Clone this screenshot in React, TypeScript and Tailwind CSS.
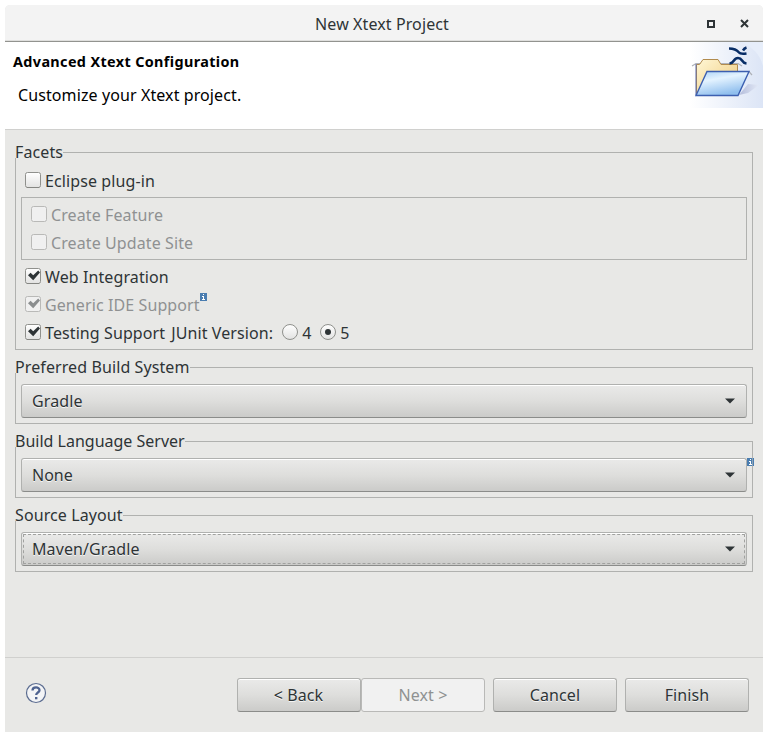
import React from "react";

const btn =
  "rounded-[3px] border border-[#b0b1af] border-b-[#8b8c8a] bg-linear-to-b from-[#eaeae9] via-[#dededc] to-[#cbcbc9] shadow-[inset_0_1px_0_#ffffff] [text-shadow:0_1px_0_#ffffffcc]";

function Mark({ kind, on, disabled }: { kind: "check" | "radio"; on?: boolean; disabled?: boolean }) {
  const ink = disabled ? "#8b8e8f" : "#2e3436";
  return (
    <svg width="16" height="16" viewBox="0 0 16 16" className="block shrink-0 overflow-visible">
      <defs>
        <linearGradient id="face" x1="0" y1="0" x2="0" y2="1">
          <stop offset="0" stopColor="#ffffff" />
          <stop offset="1" stopColor="#e2e2e1" />
        </linearGradient>
      </defs>
      {kind === "check" ? (
        <rect x=".5" y=".5" width="15" height="15" rx="2" fill={disabled ? "#f0f0f0" : "url(#face)"} stroke={disabled ? "#b9b9b7" : "#8f908c"} />
      ) : (
        <circle cx="8" cy="8" r="7.5" fill="url(#face)" stroke="#8f908c" />
      )}
      {kind === "check" && !disabled && <path d="M2 15.5h12" stroke="#858682" />}
      {on && kind === "check" && <path d="M3 7.2 5.6 4.800 8.200 7.300 13.200 2.600 15 4.400 8.200 12.300Z" fill={ink} />}
      {on && kind === "radio" && <circle cx="8" cy="8" r="3" fill={ink} />}
    </svg>
  );
}

function Check({ label, on, disabled }: { label: string; on?: boolean; disabled?: boolean }) {
  return (
    <div className={`flex h-7 items-center gap-1 ${disabled ? "text-[#8f9192]" : ""}`}>
      <Mark kind="check" on={on} disabled={disabled} />
      <span className="relative top-px whitespace-nowrap">{label}</span>
    </div>
  );
}

function Info() {
  return (
    <svg width="7" height="8" viewBox="0 0 7 8" shapeRendering="crispEdges" className="block">
      <path d="M0 0h7v8H0z" fill="#4a7db0" />
      <path d="M3 1h1v1H3zM2 3h2v3H3V4H2zM2 6h3v1H2z" fill="#ffffff" />
    </svg>
  );
}

function Group({ title, className, children }: { title: string; className: string; children: React.ReactNode }) {
  return (
    <section className={`relative border border-[#b0b1af] ${className}`}>
      <h2 className="-mt-[11px] -ml-px h-4 w-fit bg-[#e8e8e6] leading-[21px] whitespace-nowrap">{title}</h2>
      {children}
    </section>
  );
}

function Combo({ value, focused }: { value: string; focused?: boolean }) {
  return (
    <div className={`relative mx-[5px] mt-[11px] flex h-[34px] items-center justify-between pr-[11px] pl-2.5 ${btn}`}>
      <span>{value}</span>
      <svg width="10" height="6" viewBox="0 0 10 6">
        <path d="M0 .5h10L5 5.5Z" fill="#2e3436" />
      </svg>
      {focused && <div className="absolute inset-px rounded-[1px] border border-dashed border-[#a0a19f]" />}
    </div>
  );
}

function ProjectIcon() {
  return (
    <svg width="73" height="66" viewBox="0 0 73 66" className="block">
      <defs>
        <linearGradient id="sky" x1="0" y1="0" x2="1" y2="0">
          <stop offset="0" stopColor="#ffffff" />
          <stop offset="1" stopColor="#dce5f6" />
        </linearGradient>
        <linearGradient id="shade" x1="0" y1="0" x2="1" y2="0">
          <stop offset="0" stopColor="#b4bddb" />
          <stop offset="1" stopColor="#e3e9f6" />
        </linearGradient>
        <linearGradient id="front" x1="0" y1="0" x2=".4" y2="1">
          <stop offset="0" stopColor="#a9d2f6" />
          <stop offset=".4" stopColor="#e4f3ff" />
          <stop offset="1" stopColor="#90bfee" />
        </linearGradient>
        <linearGradient id="back" x1="0" y1="0" x2="1" y2="1">
          <stop offset="0" stopColor="#fff7d6" />
          <stop offset="1" stopColor="#edc777" />
        </linearGradient>
      </defs>
      <path d="M0 0H73V66H0Z" fill="url(#sky)" />
      <path d="M50 0C62 4 70 12 73 24V0Z" fill="#e7eefa" />
      <path d="M49 53 58 42 69 43 58 51Z" fill="url(#shade)" />
      <path d="M2 24 6 21.500H48L52 24M12 33 16 29.500H59L62 33" stroke="#aeb1b8" strokeWidth="1.200" fill="none" />
      <path d="M6.500 53V22.500H9.500L13 17.500H28L31 22.500H47.500V33" fill="url(#back)" stroke="#b18b4e" />
      <path d="M6 22V53" stroke="#5a69a8" />
      <path d="M6 53.500 17 29.500H59L48 53.500Z" fill="url(#front)" stroke="#3c5fb0" strokeWidth="1.400" />
      <path d="M39 6.500C43 6.500 47 8 49 10.500 50 12 53 12 56.500 11.500M53 8.500C54 6.800 55 6 56.500 5.500M39.500 21.500C45 21 43 16 48 16 53 16 51 21 56.500 21.500" fill="none" stroke="#082d66" strokeWidth="2.500" />
    </svg>
  );
}

export default function App() {
  return (
    <div className="h-[741px] w-[772px] bg-white pt-[5px] pl-[5px] font-['Noto_Sans',sans-serif] text-[16px] leading-[22px] tracking-[0.1px] text-[#2e3436]">
      <main className="flex h-[727px] w-[758px] flex-col overflow-hidden rounded-t-[5px] bg-[#e8e8e6]">
        <header className="relative flex h-[37px] shrink-0 items-center justify-center border-b border-[#92938f] bg-[#f3f3f3] shadow-[inset_0_-1px_0_#dfdfdd]">
          <span className="relative -left-[2px] top-px">New Xtext Project</span>
          <div className="absolute top-3.5 right-3.5 flex items-center gap-[25px]">
            <div className="size-2 border-2 border-[#2e3436]" />
            <svg width="9" height="9" viewBox="0 0 9 9">
              <path d="m1 1 7 7M8 1 1 8" stroke="#2e3436" strokeWidth="2" />
            </svg>
          </div>
        </header>

        <div className="flex h-[88px] shrink-0 justify-between border-b border-[#d0d0ce] bg-white text-black">
          <div className="pt-[9px] pl-2">
            <h1 className="text-[14.4px] leading-[22px] font-bold tracking-[0.37px]">Advanced Xtext Configuration</h1>
            <p className="mt-[11px] ml-[5px]">Customize your Xtext project.</p>
          </div>
          <ProjectIcon />
        </div>

        <div className="flex grow flex-col gap-[17px] px-2.5 pt-[22px]">
          <Group title="Facets" className="h-[198px]">
            <div className="mt-2 pl-[9px]">
              <Check label="Eclipse plug-in" />
            </div>
            <div className="mx-[5px] mt-[3px] h-[63px] border border-[#b0b1af] pt-[2px] pl-[9px]">
              <Check label="Create Feature" disabled />
              <Check label="Create Update Site" disabled />
            </div>
            <div className="mt-[2px] pl-[9px]">
              <Check label="Web Integration" on />
              <div className="flex">
                <Check label="Generic IDE Support" on disabled />
                <div className="mt-[3px]"><Info /></div>
              </div>
              <div className="flex items-center">
                <Check label="Testing Support" on />
                <span className="relative top-px mr-[9px] ml-1.5 w-[102px] whitespace-nowrap">JUnit Version:</span>
                <Mark kind="radio" />
                <span className="relative top-px ml-1 w-[18px]">4</span>
                <Mark kind="radio" on />
                <span className="relative top-px ml-1">5</span>
              </div>
            </div>
          </Group>
          <Group title="Preferred Build System" className="h-[57px]">
            <Combo value="Gradle" />
          </Group>
          <Group title="Build Language Server" className="h-[57px] tracking-normal">
            <Combo value="None" />
            <div className="absolute top-4 -right-[2px]"><Info /></div>
            <div className="absolute top-4 -right-px h-2 w-px bg-[#8fa3b5]" />
          </Group>
          <Group title="Source Layout" className="h-[57px]">
            <Combo value="Maven/Gradle" focused />
          </Group>
        </div>

        <footer className="flex h-[75px] shrink-0 items-center border-t border-[#d0d0ce] pr-3.5 pl-5">
          <svg width="22" height="22" viewBox="0 0 22 22" className="mr-auto mb-1">
            <circle cx="11" cy="11" r="9.500" fill="#f3f4f6" stroke="#5b6c90" strokeWidth="1.200" />
            <path d="M7.500 8.500C7.500 4.500 14.500 4.500 14.500 8.200 14.500 10.500 11.200 10.500 11.200 13" fill="none" stroke="#4f6390" strokeWidth="2.300" />
            <path d="M10 15h2.400v2.300H10z" fill="#4f6390" />
          </svg>
          <button className={`h-[34px] w-[124px] pr-px ${btn}`}>&lt; Back</button>
          <button className="mr-2 h-[34px] w-[124px] rounded-[3px] border border-[#b9b9b7] bg-[#f1f1f1] text-[#8f9192]">Next &gt;</button>
          <button className={`mr-2 h-[34px] w-[124px] ${btn}`}>Cancel</button>
          <button className={`h-[34px] w-[124px] ${btn}`}>Finish</button>
        </footer>
      </main>
    </div>
  );
}
